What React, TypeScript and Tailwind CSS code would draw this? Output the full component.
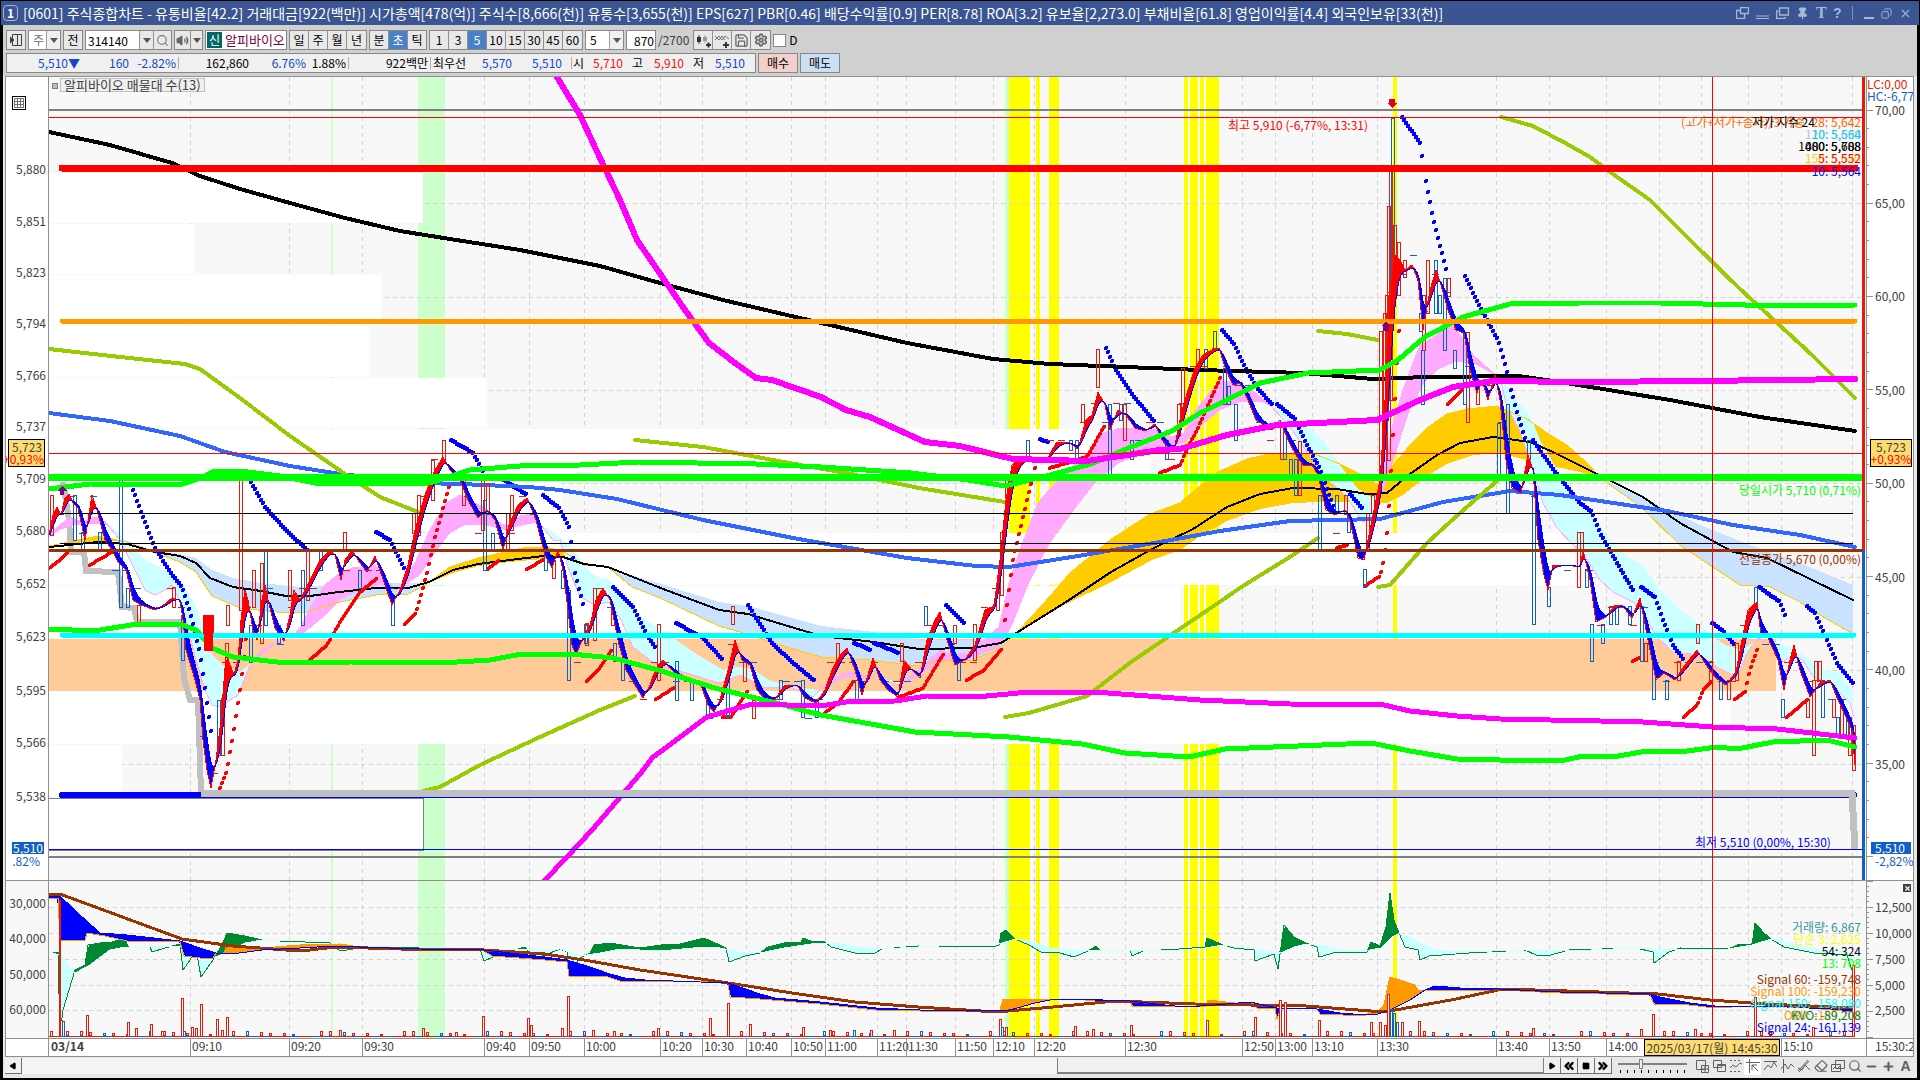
import React from 'react';
import { ChevronsLeft, ChevronsRight, Copy, Eraser, Minus, Pin, Play, Plus, Save, Search, Settings, Square, Volume2, X } from 'lucide-react';

type Pt = [number, number];

// "x,y x,y ..." -> points
const parse = (s: string): Pt[] => s.trim().split(/\s+/).map((p) => p.split(',').map(Number) as Pt);

const at = (pts: Pt[], x: number) => {
  if (x <= pts[0][0]) return pts[0][1];
  for (let i = 1; i < pts.length; i++) {
    if (x <= pts[i][0]) {
      const [x0, y0] = pts[i - 1];
      const [x1, y1] = pts[i];
      return y0 + ((y1 - y0) * (x - x0)) / (x1 - x0 || 1);
    }
  }
  return pts[pts.length - 1][1];
};

const sample = (pts: Pt[], step = 2): Pt[] => {
  const out: Pt[] = [];
  for (let x = pts[0][0]; x <= pts[pts.length - 1][0]; x += step) out.push([x, at(pts, x)]);
  return out;
};

const str = (pts: Pt[]) => pts.map((p) => p.join(',')).join(' ');

// area between two lines, split by which of them is on top
const split = (a: Pt[], b: Pt[]) => {
  const A = sample(a);
  const up: Pt[] = [];
  const down: Pt[] = [];
  const base: Pt[] = [];
  A.forEach(([x, y]) => {
    const yb = at(b, x);
    up.push([x, Math.min(y, yb)]);
    down.push([x, Math.max(y, yb)]);
    base.unshift([x, yb]);
  });
  return { up: str([...up, ...base]), down: str([...down, ...base]) };
};

const X0 = 49;
const W = 1817;
const TOP = 77;
const SUB = 881;
const pct = (x: number) => `${((x - X0) / W) * 100}%`;

const GRID_X = [190, 289, 362, 484, 529, 584, 660, 702, 746, 791, 825, 877, 906, 955, 993, 1034, 1125, 1242, 1275, 1312, 1377, 1496, 1549, 1606, 1659, 1701, 1748, 1781, 1852];
const GRID_Y = [203, 297, 390, 483, 577, 670, 764];
const SUB_Y = [907, 933, 959, 985, 1010];

const TIMES: [number, string][] = [
  [190, '09:10'], [289, '09:20'], [362, '09:30'], [484, '09:40'], [529, '09:50'], [584, '10:00'], [660, '10:20'], [702, '10:30'], [746, '10:40'],
  [791, '10:50'], [825, '11:00'], [877, '11:20'], [906, '11:30'], [955, '11:50'], [993, '12:10'], [1034, '12:20'], [1125, '12:30'], [1242, '12:50'],
  [1275, '13:00'], [1312, '13:10'], [1377, '13:30'], [1496, '13:40'], [1549, '13:50'], [1606, '14:00'], [1781, '15:10'],
];

const STRIPES: [number, number, string][] = [
  [331, 2, '#ccffcc'], [418, 27, '#ccffcc'], [1005, 4, '#ccffcc'], [1009, 21, '#ffff00'], [1036, 4, '#ffff00'], [1049, 10, '#ffff00'],
  [1184, 4, '#ffff00'], [1190, 8, '#ffff00'], [1200, 4, '#ffff00'], [1206, 13, '#ffff00'], [1393, 4, '#ffff00'],
];

// volume profile: top, bottom, right edge
const PROFILE: [number, number, number][] = [
  [173, 223, 423], [224, 274, 194], [275, 325, 381], [326, 377, 369], [378, 428, 487], [429, 480, 1150], [481, 532, 561],
  [533, 585, 1575], [586, 638, 1180], [691, 744, 1730], [745, 796, 122],
];

const LEFT_LABELS: [number, string][] = [
  [169, '5,880'], [221, '5,851'], [272, '5,823'], [323, '5,794'], [375, '5,766'], [426, '5,737'], [478, '5,709'], [530, '5,680'],
  [583, '5,652'], [636, '5,623'], [690, '5,595'], [742, '5,566'], [796, '5,538'],
];
const RIGHT_LABELS: [number, string][] = [
  [110, '70,00'], [203, '65,00'], [296, '60,00'], [390, '55,00'], [483, '50,00'], [577, '45,00'], [670, '40,00'], [764, '35,00'],
];

const PRICE = parse(`49,535 53,515 57,507 61,515 65,498 69,494 73,503 78,508 85,540 92,495 97,510 105,540 112,550 118,562 126,570 133,600 141,605
155,610 165,604 172,598 180,600 183,620 186,650 195,680 200,700 203,740 207,770 211,788 216,760 221,720 226,655 234,675 238,660 241,620 245,590
248,600 253,630 257,640 262,600 265,585 268,600 275,628 284,641 290,615 294,590 300,600 310,580 320,560 330,550 335,555 341,580 345,560 352,550
358,560 367,572 375,556 385,585 392,605 400,590 408,565 415,530 425,495 435,470 443,457 450,470 460,480 468,500 478,518 487,510 495,520 503,550
509,525 518,505 527,498 536,520 545,555 552,568 558,550 563,570 568,610 572,645 576,655 582,640 590,625 596,600 603,588 610,600 618,640 626,670
635,685 643,698 650,685 656,668 663,660 670,668 680,678 700,682 708,705 714,712 720,700 728,670 735,640 742,660 750,665 757,690 765,699 775,699
785,685 797,685 805,698 816,703 825,690 832,670 840,655 847,648 855,670 862,695 868,675 873,658 880,680 888,690 898,697 904,660 912,670 920,678
927,640 935,620 940,612 947,640 955,665 965,660 975,645 985,610 994,606 1000,560 1006,500 1012,465 1018,460 1030,457 1040,460 1048,458 1056,443
1068,442 1078,449 1086,420 1092,415 1098,392 1105,405 1110,430 1118,410 1126,415 1135,428 1145,431 1155,424 1162,440 1170,450 1175,445 1182,410
1188,390 1195,368 1203,355 1212,350 1219,348 1226,370 1233,385 1240,383 1248,400 1256,420 1264,425 1272,430 1280,420 1288,440 1296,455 1303,465
1312,465 1318,475 1326,510 1335,515 1345,510 1350,520 1358,558 1364,560 1370,530 1376,500 1380,480 1384,420 1388,340 1392,280 1395,255 1400,260
1405,270 1412,265 1418,280 1423,330 1430,290 1436,270 1441,285 1448,310 1456,330 1464,333 1470,370 1477,393 1482,380 1488,400 1495,375 1500,400
1506,460 1512,488 1521,493 1528,455 1533,470 1538,540 1544,575 1548,590 1553,565 1565,565 1580,567 1583,550 1590,580 1596,622 1606,617 1615,605
1622,605 1632,618 1640,598 1648,640 1656,680 1664,673 1675,680 1685,665 1697,650 1706,665 1716,678 1726,685 1736,672 1742,640 1748,610 1757,602
1761,635 1768,638 1778,660 1784,690 1790,660 1794,645 1800,670 1810,697 1820,683 1830,680 1838,700 1845,715 1852,730 1855,765`);

const smooth = (pts: Pt[], k: number): Pt[] => {
  let last = pts[0][1];
  return sample(pts).map(([x, y]) => {
    last += (y - last) * k;
    return [x, last] as Pt;
  });
};

const PRICE_SLOW = smooth(PRICE, 0.32);

const PINK_FAST = parse(`49,535 60,525 70,517 82,522 95,517 105,522 120,540 130,560 145,590 155,595 165,590 172,585 182,605 196,660 205,690 212,705
220,707 230,700 238,695 250,665 262,650 275,643 290,640 300,628 310,608 325,585 340,573 355,567 368,569 375,565 385,578 395,590 403,585 415,563
430,530 445,504 460,495 473,502 485,508 497,522 507,526 520,516 532,514 545,530 553,540 560,540 568,567 580,597 595,605 609,602 621,620 633,647
654,663 703,678 719,683 740,675 764,687 793,688 813,697 829,680 850,672 870,677 899,685 919,670 940,650 952,655 968,653 984,640 999,627 1009,583
1021,547 1038,503 1058,480 1087,453 1103,433 1121,428 1156,430 1172,437 1184,433 1193,414 1220,380 1247,386 1270,405 1283,419 1293,431 1307,452
1320,473 1347,497 1363,522 1377,514 1382,476 1393,424 1403,390 1420,345 1437,335 1450,323 1460,335 1473,355 1493,373 1500,378 1507,407 1520,431
1533,469 1543,503 1557,528 1573,545 1583,553 1600,580 1613,592 1633,602 1643,613 1657,637 1673,652 1700,655 1717,667 1737,677 1747,653 1758,638
1770,643 1783,662 1793,655 1803,660 1813,677 1830,683 1850,703 1854,717`);
const PINK_SLOW = parse(`49,537 60,530 75,525 95,524 110,525 125,540 145,560 165,570 180,580 195,605 205,630 212,655 225,667 240,672 255,660 275,644
300,636 320,620 340,600 360,590 380,585 395,588 405,585 420,575 435,553 450,533 465,525 485,525 505,530 520,526 535,523 550,530 570,545 590,572
600,578 610,580 621,593 642,617 666,633 695,653 723,670 736,667 752,668 768,680 797,687 817,690 846,677 870,677 907,683 927,670 948,660 968,660
984,653 1001,647 1013,623 1029,583 1050,543 1074,510 1095,483 1119,463 1152,450 1172,447 1184,443 1200,427 1220,410 1240,402 1262,402 1280,411
1295,420 1310,428 1325,443 1340,465 1357,488 1370,497 1382,495 1390,472 1400,440 1410,410 1423,385 1437,370 1455,362 1473,363 1493,374 1505,384
1515,400 1530,415 1540,440 1560,475 1575,500 1593,515 1610,540 1625,555 1643,565 1660,590 1680,610 1697,622 1712,636 1725,645 1740,650 1758,640
1775,642 1795,650 1810,660 1825,670 1840,673 1854,693`);

const GOLD_FAST = parse(`49,546 98,536 127,542 155,553 180,562 196,572 212,596 240,608 286,613 306,612 335,603 376,595 408,594 425,585 450,567 478,558
510,551 527,547 545,547 563,551 584,565 608,567 632,587 660,598 719,626 740,632 790,648 821,657 870,660 919,666 940,661 972,660 1001,648 1021,628
1045,602 1070,573 1110,540 1150,514 1180,503 1200,486 1220,471 1247,459 1273,453 1293,453 1317,455 1340,464 1360,474 1377,484 1390,469 1410,445
1427,428 1447,414 1467,409 1497,406 1527,419 1550,435 1567,445 1590,466 1600,478 1640,506 1680,545 1740,585 1770,587 1800,602 1820,615 1853,634`);
const GOLD_SLOW = parse(`49,545 98,541 127,541 155,551 180,554 196,558 212,570 233,578 261,583 300,587 339,585 376,583 408,583 429,583 453,573 478,566
510,562 543,559 563,558 584,565 608,567 640,578 658,583 719,602 748,606 821,626 874,632 919,640 972,640 1001,643 1021,630 1066,604 1111,582
1152,560 1180,550 1203,534 1227,521 1260,509 1293,503 1320,502 1347,502 1363,505 1387,503 1403,495 1427,476 1447,464 1473,455 1500,453 1523,459
1547,465 1580,472 1600,478 1660,506 1700,525 1750,545 1800,563 1853,585`);

interface Line {
  color: string;
  width: number;
  points: string;
}

const LINES: Line[] = [
  { color: '#000000', width: 4, points: '49,132 110,145 172,163 200,176 240,189 290,203 345,218 400,231 450,239 520,250 600,266 660,283 723,300 817,322 907,343 993,359 1050,364 1200,370 1303,373 1373,379 1427,377 1518,376 1560,382 1670,400 1760,417 1855,431' },
  { color: '#3366ff', width: 4, points: '49,413 110,421 180,436 225,452 290,466 340,474 420,483 460,484 529,487 560,490 617,499 703,520 793,538 907,558 976,566 1009,567 1078,556 1160,542 1220,531 1290,521 1380,519 1443,502 1510,491 1560,495 1667,511 1733,525 1800,535 1855,547' },
  { color: '#99cc00', width: 4, points: '49,349 120,357 185,364 200,369 240,398 290,436 345,474 380,497 418,512' },
  { color: '#99cc00', width: 4, points: '423,791 440,787 480,765 540,737 600,710 635,696' },
  { color: '#99cc00', width: 4, points: '635,440 703,447 789,463 846,473 919,488 1005,502' },
  { color: '#99cc00', width: 4, points: '1005,717 1029,713 1087,696 1131,662 1193,620 1243,586 1293,555 1318,538' },
  { color: '#99cc00', width: 4, points: '1318,331 1347,334 1378,340' },
  { color: '#99cc00', width: 4, points: '1378,587 1390,585 1427,543 1460,513 1497,481' },
  { color: '#99cc00', width: 4, points: '1501,117 1533,126 1567,144 1590,157 1610,172 1650,200 1695,245 1739,288 1812,355 1855,398' },
  { color: '#00ff00', width: 5, points: '49,629 94,631 131,625 180,624 196,630 212,648 233,657 286,663 351,662 441,663 490,660 522,654 571,654 613,658 658,670 715,688 772,702 821,715 915,732 1009,737 1082,744 1125,753 1189,757 1225,749 1371,743 1410,751 1457,759 1500,760 1565,760 1583,756 1613,757 1647,751 1687,751 1717,747 1737,749 1773,742 1827,740 1855,747' },
  { color: '#00ff00', width: 5, points: '49,489 90,484 180,485 200,478 215,471 240,471 280,476 320,484 430,483 470,470 520,466 580,465 638,462 756,464 821,467 911,473 968,480 1005,486 1050,475 1091,464 1131,447 1172,431 1200,413 1227,400 1260,383 1308,373 1380,370 1398,360 1425,337 1463,317 1510,304 1580,303 1660,303 1788,306 1855,305' },
  { color: '#ff00ff', width: 6, points: '557,77 580,115 600,158 620,200 637,240 661,275 685,310 709,343 735,363 756,378 772,380 821,397 846,410 870,417 925,442 960,446 1013,459 1087,461 1160,450 1180,449 1227,435 1277,425 1377,420 1420,400 1453,387 1493,381 1580,382 1700,381 1855,379' },
  { color: '#ff00ff', width: 5, points: '545,880 567,857 592,830 640,774 652,758 660,752 707,717 752,704 821,706 846,702 895,701 927,696 976,697 1029,692 1095,692 1200,700 1290,704 1384,705 1410,711 1457,716 1500,719 1600,721 1643,722 1713,727 1777,729 1855,738' },
];

const MID_BLACK = '49,547 98,542 127,544 155,552 180,556 196,563 210,578 233,587 261,591 286,596 310,596 339,592 376,588 408,588 429,582 453,570 478,564 510,560 543,556 563,557 584,564 608,567 658,587 719,610 748,614 821,636 874,642 919,649 972,648 1001,643 1021,630 1066,602 1111,572 1152,549 1193,529 1227,507 1260,494 1293,488 1337,489 1367,494 1387,493 1410,474 1437,455 1460,443 1493,437 1530,442 1553,452 1593,472 1643,497 1680,523 1733,552 1767,558 1853,600';

const SAR_DOWN = [
  '133,490 143,517 155,548 171,573 182,587 190,612 200,653 212,738', '251,482 265,507 286,530 308,551', '376,532 390,540 404,568',
  '451,440 473,453 484,473', '504,480 527,495', '543,495 559,508 569,527 575,573 584,608', '613,587 633,607 646,633 656,649',
  '676,623 703,638 723,660', '748,605 772,643 793,663 815,681', '854,643 871,650', '874,643 899,653', '946,605 965,624', '1040,439 1048,442',
  '1106,348 1115,368 1131,393 1154,421', '1222,330 1234,344 1245,367 1257,388 1273,405', '1277,404 1295,419 1307,445 1320,469 1333,506',
  '1350,494 1363,509', '1402,117 1420,143 1425,176 1433,218 1447,273', '1465,276 1480,307 1498,340 1506,367 1510,386 1517,412 1525,438',
  '1533,440 1553,469 1580,503 1592,512 1600,533 1617,563 1633,590', '1641,587 1655,597 1662,617 1673,645 1683,659', '1712,623 1722,630 1734,644',
  '1759,587 1780,602 1786,618', '1807,606 1815,613 1827,640 1837,663 1853,683',
];
const SAR_UP = [
  '49,568 60,560 68,552', '90,565 112,552', '220,788 227,770 235,723 241,683 247,630', '310,660 327,645 343,617 359,593 376,579',
  '405,624 416,613 427,573 435,537 449,487', '488,569 498,561', '527,569 543,560', '587,681 598,670 612,650', '656,699 674,688',
  '723,717 731,717 748,690', '825,713 838,703 854,681', '899,697 923,688 944,653', '967,680 984,670 1001,650 1013,560 1027,500 1035,468',
  '1050,468 1087,457 1105,425', '1160,473 1180,465 1188,447 1198,428 1220,378', '1337,548 1348,545',
  '1365,586 1380,576 1384,559 1388,524 1394,417 1398,345 1400,317', '1448,404 1463,389', '1633,661 1640,658', '1684,717 1697,705 1703,690 1711,682',
  '1735,699 1745,692 1750,670 1757,650', '1787,717 1807,700',
];

// one dot per bar, so steep moves spread out
const dots = (p: string) => sample(parse(p)).map(([x, y]) => `M${x} ${Math.round(y)}h0`).join('');

// candles: x, high, low
const CANDLES_UP = [
  [51, 495, 535], [240, 480, 610], [227, 605, 625], [253, 570, 607], [261, 563, 643], [289, 570, 600], [307, 550, 600], [344, 532, 550], [443, 440, 460],
  [432, 460, 500], [418, 495, 535], [413, 513, 533], [463, 480, 505], [482, 480, 530], [487, 483, 513], [511, 495, 530], [507, 513, 550], [553, 560, 578],
  [173, 587, 607], [594, 588, 640], [586, 623, 645], [612, 607, 625], [138, 605, 625], [226, 643, 680], [222, 698, 755], [658, 624, 680], [732, 606, 624],
  [744, 661, 681], [753, 700, 718], [837, 643, 661], [901, 643, 661], [954, 625, 643], [974, 624, 660], [1001, 532, 595], [997, 587, 610], [1006, 480, 498],
  [1097, 349, 387], [1082, 404, 422], [1124, 404, 440], [1178, 404, 435], [1182, 368, 415], [1197, 349, 370], [1281, 422, 459], [1299, 441, 495],
  [1345, 495, 513], [1372, 495, 513], [1367, 513, 550], [1380, 331, 480], [1384, 313, 480], [1388, 206, 460], [1386, 295, 420], [1390, 171, 400], [1394, 225, 280],
  [1398, 242, 295], [1404, 260, 277], [1427, 260, 313], [1423, 295, 350], [1448, 278, 296], [1467, 332, 422], [1477, 386, 404], [1578, 532, 587],
  [1581, 532, 550], [1697, 624, 643], [1678, 661, 680], [1710, 661, 680], [1728, 680, 699], [1736, 643, 680], [1645, 643, 661], [1815, 661, 680], [1813, 680, 755],
  [1819, 661, 680], [1807, 699, 717], [1833, 699, 717], [1841, 699, 736], [1849, 717, 755], [1853, 725, 770],
];
const CANDLES_DOWN = [
  [74, 495, 540], [82, 532, 550], [120, 480, 607], [127, 588, 607], [99, 532, 550], [182, 615, 660], [218, 700, 755], [250, 625, 662], [265, 550, 625],
  [278, 625, 643], [302, 570, 625], [320, 550, 570], [359, 570, 588], [392, 600, 625], [484, 500, 570], [492, 533, 550], [545, 550, 570], [562, 570, 588],
  [568, 590, 680], [585, 624, 643], [614, 643, 661], [622, 661, 680], [676, 661, 700], [691, 680, 700], [707, 699, 717], [727, 680, 717], [780, 680, 699],
  [802, 680, 717], [816, 699, 717], [856, 680, 700], [925, 606, 625], [958, 661, 680], [1027, 440, 458], [1070, 440, 450], [1076, 440, 458], [1109, 404, 480],
  [1120, 404, 420], [1131, 440, 459], [1166, 440, 459], [1214, 331, 350], [1205, 349, 368], [1224, 368, 404], [1228, 386, 404], [1235, 404, 440],
  [1284, 422, 459], [1290, 459, 480], [1295, 459, 495], [1319, 495, 550], [1336, 495, 513], [1348, 513, 532], [1364, 569, 587], [1392, 118, 300],
  [1420, 313, 331], [1422, 350, 404], [1435, 260, 313], [1439, 295, 313], [1444, 278, 350], [1454, 350, 368], [1464, 332, 404], [1498, 423, 480],
  [1507, 404, 513], [1528, 440, 459], [1533, 495, 624], [1548, 587, 606], [1586, 569, 587], [1591, 624, 661], [1602, 624, 643], [1610, 606, 624],
  [1616, 606, 624], [1629, 606, 624], [1641, 606, 661], [1653, 661, 699], [1666, 680, 699], [1720, 680, 699], [1755, 587, 606], [1782, 699, 717],
  [1822, 680, 717], [1837, 717, 736], [1847, 717, 736],
];

const KVO_FAST = parse(`49,952 58,952 60,1035 63,1010 75,970 85,965 88,945 100,943 112,942 125,938 128,947 150,947 152,952 165,948 180,944 183,970 190,960
195,952 198,960 201,977 213,960 222,945 227,933 245,936 262,940 280,941 330,943 340,951 360,948 420,947 480,949 484,961 500,954 525,947 530,955
540,957 560,949 567,952 569,975 580,958 590,953 594,945 610,943 640,948 661,945 680,944 704,938 722,946 726,948 729,962 745,956 760,953 768,947
784,943 801,942 803,938 811,941 825,942 831,947 855,953 875,953 882,949 918,946 993,947 999,945 1001,933 1006,930 1015,939 1029,945 1041,952
1060,953 1074,957 1088,951 1096,946 1100,950 1130,950 1132,956 1143,951 1179,949 1205,947 1207,938 1223,945 1234,948 1254,950 1255,961 1274,954
1278,969 1281,947 1284,925 1294,937 1306,943 1317,947 1319,957 1337,952 1367,952 1371,942 1380,946 1386,927 1390,893 1394,920 1399,933 1405,947
1418,950 1420,960 1429,956 1469,953 1525,950 1536,955 1547,956 1569,950 1636,948 1653,952 1654,963 1669,952 1680,948 1728,949 1740,944 1752,945
1755,923 1764,933 1771,939 1784,947 1814,953 1847,955 1852,970 1854,1030`);
const KVO_SLOW = parse(`49,952 60,955 75,973 90,965 110,950 125,947 150,947 180,946 195,952 213,958 225,953 245,943 262,940 300,940 330,942 345,946
420,947 484,949 500,950 560,949 580,956 600,953 620,949 660,951 704,947 720,948 740,952 760,953 784,948 811,944 831,943 855,946 875,949 900,948
918,947 960,945 993,946 1015,939 1030,941 1050,948 1075,951 1096,950 1130,950 1179,950 1205,948 1223,945 1250,948 1270,952 1281,953 1294,947
1306,944 1325,946 1345,951 1370,950 1381,948 1392,937 1400,933 1415,940 1435,950 1460,952 1525,950 1569,951 1636,948 1665,950 1728,949 1752,945
1771,939 1790,943 1820,950 1847,952 1854,958`);
const OBV_FAST = parse(`49,898 58,898 60,940 85,940 87,933 105,936 127,941 180,942 184,956 200,958 213,958 216,953 224,953 226,947 262,948 300,945 340,944
360,947 420,950 484,951 492,956 545,960 567,962 569,976 605,976 620,981 640,981 728,982 730,997 760,999 820,1004 876,1010 920,1011 997,1012
1000,1010 1003,999 1030,999 1075,999 1095,1001 1130,1001 1132,1006 1160,1006 1206,1006 1208,1000 1235,1003 1255,1003 1257,1008 1275,1008
1277,1019 1281,1008 1317,1009 1320,1014 1365,1016 1371,1011 1378,1011 1384,1005 1388,985 1390,977 1400,980 1415,985 1418,990 1425,990 1500,990
1560,993 1650,995 1654,1004 1680,1004 1715,1008 1750,1006 1800,1007 1853,1012`);
const OBV_SLOW = parse(`49,896 61,897 80,915 100,933 127,935 180,941 200,948 216,953 232,954 262,950 300,948 335,946 360,947 420,949 484,950 545,957
567,960 590,967 610,974 625,978 645,980 728,983 740,987 760,994 775,998 820,1002 876,1008 920,1010 997,1011 1010,1010 1035,1003 1055,999 1075,999
1130,1001 1165,1005 1185,1007 1215,1005 1250,1002 1277,1008 1317,1009 1340,1013 1365,1015 1378,1014 1390,1010 1410,1000 1425,990 1435,986
1460,988 1500,989 1560,992 1650,994 1660,997 1690,1003 1715,1006 1765,1006 1853,1010`);
const SIGNAL = '49,894 60,894 182,939 233,946 286,950 310,950 335,947 400,949 484,950 545,954 590,961 640,970 735,984 792,993 855,1002 918,1007 997,1012 1053,1007 1116,1001 1195,1004 1306,1006 1384,1012 1451,1000 1503,989 1599,992 1658,994 1710,1000 1765,1004 1854,1008';

const VOLUME: [number, number][] = [
  [51, 1031], [61, 1020], [87, 1015], [128, 1022], [136, 1028], [151, 1024], [162, 1031], [182, 998], [192, 1027], [196, 1028], [201, 1004], [217, 1019],
  [222, 1030], [227, 1017], [340, 1030], [423, 1028], [456, 1032], [483, 1016], [528, 1018], [531, 1025], [562, 1028], [568, 996], [593, 1030], [614, 1031],
  [658, 1028], [710, 1018], [728, 1003], [750, 1024], [803, 1027], [830, 1030], [871, 1030], [894, 1030], [1000, 1019], [1006, 1027], [1075, 1026],
  [1093, 1029], [1131, 1025], [1207, 1020], [1255, 1017], [1280, 1000], [1285, 1002], [1319, 1020], [1371, 1022], [1380, 1022], [1385, 1025], [1388, 994],
  [1402, 1022], [1419, 1021], [1533, 1028], [1641, 1029], [1653, 1014], [1695, 1029], [1755, 997], [1813, 1027], [1853, 965],
];

const TEXT = "font-['Noto_Sans_CJK_KR',sans-serif] text-[12px] leading-3";

const Poly = ({ color, width, points }: Line) => (
  <polyline points={points} fill="none" stroke={color} strokeWidth={width} strokeLinecap="round" strokeLinejoin="round" />
);

const Band = ({ id, fast, slow, up, down }: { id: string; fast: Pt[]; slow: Pt[]; up: string; down: string }) => {
  const area = split(fast, slow);
  return (
    <g id={id}>
      <polygon points={area.up} fill={up} />
      <polygon points={area.down} fill={down} />
    </g>
  );
};

const Candles = ({ data, color }: { data: number[][]; color: string }) => (
  <g fill="none" stroke={color} strokeWidth={1}>
    {data.map(([x, y0, y1], i) => (
      <rect key={i} x={x - 1} y={y0} width={3} height={y1 - y0} />
    ))}
  </g>
);

// short ticks at the traded price steps
const STEPS = sample(PRICE, 11).map(([x, y], i) => {
  const level = 440 + Math.round((y - 440 + (i % 3 === 0 ? 9 : -7)) / 18.5) * 18.5;
  return { x, y: Math.round(level), up: at(PRICE, x + 4) < y };
});

const PricePane = () => (
  <svg viewBox={`${X0} ${TOP} ${W} 803`} preserveAspectRatio="none" shapeRendering="crispEdges" className="block h-full w-full">
    <rect x={X0} y={TOP} width={W} height={803} fill="#f8f8f8" />
    {STRIPES.map(([x, w, c]) => (
      <rect key={x} x={x} y={TOP} width={w} height={803} fill={c} />
    ))}
    <g stroke="#d4d4d4" strokeDasharray="4 4">
      {GRID_X.map((x) => <line key={x} x1={x} x2={x} y1={TOP} y2={880} />)}
      {GRID_Y.map((y) => <line key={y} x1={X0} x2={1861} y1={y} y2={y} />)}
    </g>
    {PROFILE.map(([y0, y1, x]) => (
      <rect key={y0} x={X0} y={y0} width={x - X0} height={y1 - y0} fill="#ffffff" />
    ))}
    <rect x={X0} y={639} width={1727} height={52} fill="#ffcc99" />
    <rect x={X0 - 1} y={798} width={375} height={52} fill="#ffffff" stroke="#808080" />
    <line x1={X0} x2={1862} y1={110} y2={110} stroke="#808080" strokeWidth={2} />
    <line x1={X0} x2={1862} y1={857} y2={857} stroke="#808080" strokeWidth={2} />

    <polyline points="63,482 69,520 71,552 84,552 86,571 118,572 122,607 134,608 137,622 180,622 184,678 190,700 198,700 201,793" fill="none" stroke="#c0c0c0" strokeWidth={6} />
    <Band id="gold" fast={GOLD_FAST} slow={GOLD_SLOW} up="#ffcc00" down="#c8e2ff" />
    <Band id="pink" fast={PINK_FAST} slow={PINK_SLOW} up="#ffaaff" down="#ccffff" />
    <polyline points={str(GOLD_FAST)} fill="none" stroke="#ffcc00" />
    <polyline points={str(PINK_FAST)} fill="none" stroke="#ffaaff" />
    <Poly color="#000000" width={2} points={MID_BLACK} />

    <g fill="none" strokeWidth={4} strokeLinecap="round">
      {SAR_DOWN.map((p) => <path key={p} d={dots(p)} stroke="#0000ff" />)}
      {SAR_UP.map((p) => <path key={p} d={dots(p)} stroke="#ff0000" />)}
    </g>

    {LINES.slice(0, 9).map((l) => <Poly key={l.points} {...l} />)}
    <Candles data={CANDLES_UP} color="#e81a0c" />
    <Candles data={CANDLES_DOWN} color="#1060c8" />
    {STEPS.map((s) => (
      <line key={s.x} x1={s.x - 3} x2={s.x + 4} y1={s.y} y2={s.y} stroke={s.up ? '#e81a0c' : '#1060c8'} />
    ))}
    <Band id="price" fast={PRICE} slow={PRICE_SLOW} up="#ff0000" down="#0000ff" />
    <polyline points={str(PRICE)} fill="none" stroke="#ff0000" strokeWidth={1} />
    <polyline points={str(PRICE_SLOW)} fill="none" stroke="#0000ff" strokeWidth={1} />
    {LINES.slice(9).map((l) => <Poly key={l.points} {...l} />)}

    <Poly color="#ff0000" width={7} points="62,168 1855,168" />
    <Poly color="#ff9900" width={5} points="62,321 1855,321" />
    <line x1={X0} x2={1862} y1={477} y2={477} stroke="#00ff00" strokeWidth={7} />
    <line x1={60} x2={1853} y1={513} y2={513} stroke="#000000" />
    <line x1={60} x2={1853} y1={543} y2={543} stroke="#000000" />
    <line x1={X0} x2={1862} y1={550} y2={550} stroke="#993300" strokeWidth={3} />
    <Poly color="#00ffff" width={5} points="62,635 1854,635" />
    <Poly color="#0000ff" width={6} points="62,795 1854,795" />
    <polyline points="201,793 1852,793 1855,850" fill="none" stroke="#c0c0c0" strokeWidth={7} />
    <line x1={X0} x2={1862} y1={849} y2={849} stroke="#0000ff" />
    <line x1={X0} x2={1862} y1={117} y2={117} stroke="#ff0000" />
    <line x1={X0} x2={1862} y1={453} y2={453} stroke="#ff0000" />

    <path d="M203 615h11l-1 36h-9z" fill="#ff0000" />
    <path d="M62 486l5 5h-3v4h-4v-4h-3z" fill="#800080" />
    <path d="M1386 322l5 4h-2v5h-6v-5h-2z" fill="#800080" />
    <path d="M1392 108l5-5h-2v-4h-6v4h-2z" fill="#dd0022" />
    <line x1={1712} x2={1712} y1={TOP} y2={880} stroke="#ff0000" />
    <rect x={1862} y={TOP} width={3} height={473} fill="#e81a0c" />
    <rect x={1862} y={550} width={3} height={330} fill="#1060c8" />
  </svg>
);

const VolumePane = () => (
  <svg viewBox={`${X0} ${SUB} ${W} 157`} preserveAspectRatio="none" shapeRendering="crispEdges" className="block h-full w-full">
    <rect x={X0} y={SUB} width={W} height={157} fill="#f8f8f8" />
    {STRIPES.map(([x, w, c]) => (
      <rect key={x} x={x} y={SUB} width={w} height={157} fill={c} />
    ))}
    <g stroke="#d4d4d4" strokeDasharray="4 4">
      {GRID_X.map((x) => <line key={x} x1={x} x2={x} y1={SUB} y2={1038} />)}
      {SUB_Y.map((y) => <line key={y} x1={X0} x2={1861} y1={y} y2={y} />)}
    </g>
    <Band id="kvo" fast={KVO_FAST} slow={KVO_SLOW} up="#008833" down="#ccffff" />
    <polyline points={str(KVO_FAST)} fill="none" stroke="#008833" />
    <polyline points={str(KVO_SLOW)} fill="none" stroke="#ccffff" />
    <Band id="obv" fast={OBV_FAST} slow={OBV_SLOW} up="#ff9900" down="#0000ff" />
    <polyline points={str(OBV_FAST)} fill="none" stroke="#ff9900" />
    <Poly color="#993300" width={3} points={SIGNAL} />
    <polyline points={str(OBV_SLOW)} fill="none" stroke="#0000ff" />
    <line x1={60} x2={60} y1={900} y2={1037} stroke="#e81a0c" strokeWidth={2} />
    <line x1={X0} x2={1855} y1={1036} y2={1036} stroke="#1060c8" />
    <line x1={X0} x2={1855} y1={1036} y2={1036} stroke="#e81a0c" strokeDasharray="14 9 5 6 21 7" />
    <g fill="none" strokeWidth={1}>
      {Array.from({ length: 150 }).map((_, i) => (
        <rect key={i} x={52 + i * 12 + ((i * 7) % 5)} y={1035 - ((i * 13) % 7) / 1.5} width={2} height={((i * 13) % 7) / 1.5} stroke={i % 4 === 0 ? '#1060c8' : '#e81a0c'} />
      ))}
      {VOLUME.map(([x, y]) => (
        <rect key={x} x={x - 1} y={y} width={2} height={1036 - y} fill="#f8f8f8" stroke="#e81a0c" />
      ))}
      {[[63, 1021], [184, 1031], [854, 1030], [1002, 1027], [1391, 1009], [1394, 1013], [1397, 1022]].map(([x, y]) => (
        <rect key={x} x={x - 1} y={y} width={2} height={1036 - y} stroke="#1060c8" />
      ))}
    </g>
    <line x1={1712} x2={1712} y1={SUB} y2={1038} stroke="#ff0000" />
  </svg>
);

const Note = ({ top, x, className = '', children }: { top: number; x?: number; className?: string; children: React.ReactNode }) => (
  <span
    className={`absolute -translate-y-1/2 whitespace-nowrap ${x === undefined ? 'right-[5px]' : ''} ${className}`}
    style={x === undefined ? { top } : { top, left: pct(x) }}
  >
    {children}
  </span>
);

const Axis = ({ labels, origin, side }: { labels: [number, string][]; origin: number; side: 'left' | 'right' }) => (
  <>
    {labels.map(([y, t]) => (
      <span key={t} className={`absolute -translate-y-1/2 text-[#404040] ${side === 'left' ? 'right-0.5' : 'left-2'}`} style={{ top: y - origin }}>
        {t}
      </span>
    ))}
  </>
);

// tick marks down the inner edge of a right-hand axis
const Ticks = ({ from, to, step, major }: { from: number; to: number; step: number; major: number }) => {
  const n = Math.floor((to - from) / step);
  return (
    <svg className="absolute top-0 left-0 h-full w-1.5" shapeRendering="crispEdges">
      {Array.from({ length: n + 1 }).map((_, i) => (
        <line key={i} x1={0} x2={i % major === 0 ? 6 : 2} y1={from + i * step} y2={from + i * step} stroke="#909090" />
      ))}
    </svg>
  );
};

const Btn = ({ children, active = false, className = 'w-[19px]', label }: { children: React.ReactNode; active?: boolean; className?: string; label?: string }) => (
  <button
    type="button"
    aria-label={label}
    className={`flex h-full items-center justify-center border-r border-[#909090] last:border-r-0 ${active ? 'bg-[#4a80c8] text-white' : 'bg-[#e8e8e8]'} ${className}`}
  >
    {children}
  </button>
);

const Group = ({ children, className = '' }: { children: React.ReactNode; className?: string }) => (
  <div className={`flex h-5 shrink-0 border border-[#888888] bg-white ${className}`}>{children}</div>
);

const Arrow = () => (
  <svg viewBox="0 0 8 5" className="h-[5px] w-2">
    <path d="M0 0h8L4 5z" fill="#555555" />
  </svg>
);

const Picker = ({ value, className, label }: { value: string; className: string; label: string }) => (
  <label className={`relative flex items-center ${className}`}>
    <select aria-label={label} defaultValue={value} className="h-full w-full appearance-none pl-1 outline-none">
      <option>{value}</option>
    </select>
    <span className="pointer-events-none absolute inset-y-0 right-0 flex w-[14px] items-center justify-center border-l border-[#a0a0a0] bg-[#f0f0f0]">
      <Arrow />
    </span>
  </label>
);

const TitleBar = () => (
  <header className="mr-px ml-px flex h-6 items-center bg-[#3a5591] pr-[7px] pl-0.5 text-white">
    <span className="mr-[5px] flex h-4 w-[15px] items-center justify-center rounded-sm border border-[#a9b6d6] font-bold">1</span>
    <h1 className="flex-1 text-[14px] leading-5 whitespace-nowrap">
      [0601] 주식종합차트 - 유통비율[42.2] 거래대금[922(백만)] 시가총액[478(억)] 주식수[8,666(천)] 유통수[3,655(천)] EPS[627] PBR[0.46] 배당수익률[0.9]
      PER[8.78] ROA[3.2] 유보율[2,273.0] 부채비율[61.8] 영업이익률[4.4] 외국인보유[33(천)]
    </h1>
    <div className="flex items-center gap-[7px] text-[#a9b6d6]">
      <button type="button" aria-label="새 창">
        <svg viewBox="0 0 13 12" className="h-3 w-[13px]" fill="none" stroke="currentColor"><path d="M4.500 .5h8v6h-8zM4 3.500H.5v8h8V7" strokeWidth="1.400" /></svg>
      </button>
      <button type="button" aria-label="숨기기">
        <svg viewBox="0 0 13 12" className="h-3 w-[13px]" fill="none" stroke="currentColor"><path d="M0 9h13M0 11.500h13" /></svg>
      </button>
      <button type="button" aria-label="복제">
        <svg viewBox="0 0 13 12" className="h-3 w-[13px]" fill="none" stroke="currentColor"><path d="M3.500 1h9v7h-9zM2 4H.5v7.500H9V10" strokeWidth="1.400" /></svg>
      </button>
      <button type="button" aria-label="고정"><Pin size={13} fill="currentColor" /></button>
      <button type="button" className="w-2.5 font-['Liberation_Serif',serif] text-[16px] font-bold">T</button>
      <button type="button" className="w-2 font-['Liberation_Sans',sans-serif] text-[14px] font-bold">?</button>
      <span className="mx-1 h-3.5 w-px bg-[#8090a8]" />
      <button type="button" aria-label="최소화" className="flex h-3 w-2.5 items-end border-b-2 border-current" />
      <button type="button" aria-label="이전 크기"><Copy size={11} className="-scale-x-100" /></button>
      <button type="button" aria-label="닫기"><X size={13} /></button>
    </div>
  </header>
);

const Toolbar = () => (
  <div className="flex gap-0.5 pl-[3px]">
    <Group><Btn label="차트 목록" className="w-[18px]">
      <svg viewBox="0 0 12 12" className="size-3" fill="none" stroke="#404040"><path d="M2.500 .5h9v11h-9z" /><path d="M0 3l4 3-4 3z" fill="#404040" /><path d="M7.500 1v10" /></svg>
    </Btn></Group>
    <Group><Picker value="주" label="종목 구분" className="w-[31px] text-[#707070]" /></Group>
    <Group><Btn className="w-[18px]">전</Btn></Group>
    <Group>
      <input aria-label="종목코드" defaultValue="314140" className="w-[53px] pl-0.5 outline-none" />
      <Btn label="최근 종목" className="w-[15px] border-l"><Arrow /></Btn>
      <Btn label="종목 검색" className="w-[17px]"><Search size={13} color="#777777" /></Btn>
    </Group>
    <Group>
      <Btn label="소리" className="w-4"><Volume2 size={13} color="#666666" fill="#666666" /></Btn>
      <Btn label="소리 설정" className="w-[11px]"><Arrow /></Btn>
    </Group>
    <Group className="w-[82px]">
      <span className="flex w-[17px] items-center justify-center border border-white bg-[#006666] text-white">신</span>
      <span className="flex items-center pl-0.5 text-[13px] whitespace-nowrap text-[#800040]">알피바이오</span>
    </Group>
    <Group><Btn>일</Btn><Btn>주</Btn><Btn>월</Btn><Btn>년</Btn></Group>
    <Group><Btn>분</Btn><Btn active>초</Btn><Btn className="w-[18px]">틱</Btn></Group>
    <Group>
      {['1', '3', '5', '10', '15', '30', '45', '60'].map((n) => (
        <Btn key={n} active={n === '5'}>{n}</Btn>
      ))}
    </Group>
    <Group><Picker value="5" label="주기" className="w-[37px]" /></Group>
    <Group className="w-[30px]">
      <input aria-label="조회 개수" defaultValue="870" className="w-full pr-px text-right outline-none" />
    </Group>
    <span className="flex items-center text-[#404040]">/2700</span>
    <Group className="ml-0.5">
      <Btn label="차트 추가">
        <svg viewBox="0 0 15 15" className="size-[15px]"><path d="M1 4h4v5H1zM2.500 2h1v9h-1z" fill="#333333" /><path d="M7 4h4v4H7zM8.500 2h1v8h-1z" fill="#999999" /><path d="M10 12h5M12.500 9.500v5" stroke="#333333" strokeWidth="2" /></svg>
      </Btn>
      <Btn label="지표 추가">
        <svg viewBox="0 0 15 15" className="size-[15px]" fill="none" stroke="#777777"><path d="M0 7l4-4 3 4 3-4 4 3M0 3l4 4 3-4 3 4" /><path d="M8 12h6M11 9v6" stroke="#333333" strokeWidth="2" /></svg>
      </Btn>
      <Btn label="저장"><Save size={15} color="#666666" /></Btn>
      <Btn label="설정"><Settings size={14} color="#666666" strokeWidth={3} /></Btn>
    </Group>
    <label className="flex items-center gap-[3px]">
      <input type="checkbox" className="size-[13px] appearance-none border border-[#888888] bg-white" />D
    </label>
  </div>
);

const QuoteBar = () => (
  <div className="mt-[3px] flex h-5 gap-0.5 pl-[3px]">
    <dl className="flex w-[750px] items-center border border-[#888888] bg-[#f0f0f0] whitespace-nowrap text-[#1048c8]">
      <dd className="w-[73px] text-right">5,510▼</dd>
      <dd className="w-[49px] text-right">160</dd>
      <dd className="w-[50px] border-r border-[#b0b0b0] pr-0.5 text-right">-2.82%</dd>
      <dd className="w-[70px] text-right text-black">162,860</dd>
      <dd className="w-[57px] text-right">6.76%</dd>
      <dd className="w-[43px] border-r border-[#b0b0b0] pr-0.5 text-right text-black">1.88%</dd>
      <dd className="w-[82px] border-r border-[#b0b0b0] pr-0.5 text-right text-black">922백만</dd>
      <dt className="w-[39px] pl-0.5 text-black">최우선</dt>
      <dd className="w-[42px] text-right">5,570</dd>
      <dd className="w-[60px] border-r border-[#b0b0b0] pr-[9px] text-right">5,510</dd>
      <dt className="w-[17px] pl-px text-black">시</dt>
      <dd className="w-[34px] text-right text-[#f01010]">5,710</dd>
      <dt className="w-[27px] pl-[9px] text-black">고</dt>
      <dd className="w-[34px] text-right text-[#f01010]">5,910</dd>
      <dt className="w-[27px] pl-[9px] text-black">저</dt>
      <dd className="w-[34px] text-right">5,510</dd>
    </dl>
    <button type="button" className="w-10 border border-[#888888] bg-[#f4d0cc]">매수</button>
    <button type="button" className="w-10 border border-[#888888] bg-[#c8dff4]">매도</button>
  </div>
);

const Tool = ({ label, active = false, children }: { label: string; active?: boolean; children: React.ReactNode }) => (
  <button type="button" aria-label={label} className={`flex h-[17px] w-[17px] items-center justify-center text-[#606060] ${active ? 'bg-white' : ''}`}>
    {children}
  </button>
);

const Glyph = ({ d }: { d: string }) => (
  <svg viewBox="0 0 14 14" className="size-3.5" fill="none" stroke="currentColor">
    <path d={d} />
  </svg>
);

const PlayBtn = ({ label, children }: { label: string; children: React.ReactNode }) => (
  <button type="button" aria-label={label} className="flex h-4 w-[17px] items-center justify-center border-r border-b border-[#707070] bg-[#f0f0f0] text-black">
    {children}
  </button>
);

const BottomBar = () => (
  <footer className="mt-px flex h-4 items-center">
    <PlayBtn label="왼쪽으로"><Play size={8} fill="currentColor" className="rotate-180" /></PlayBtn>
    <div className="flex h-4 flex-1 justify-end bg-[#f4f4f4]">
      <div className="h-full w-[32%] border-r border-b-2 border-l border-[#808080] bg-[#f0f0f0]" />
    </div>
    <PlayBtn label="재생"><Play size={8} fill="currentColor" /></PlayBtn>
    <PlayBtn label="뒤로"><ChevronsLeft size={14} strokeWidth={4} /></PlayBtn>
    <PlayBtn label="정지"><Square size={8} fill="currentColor" /></PlayBtn>
    <PlayBtn label="앞으로"><ChevronsRight size={14} strokeWidth={4} /></PlayBtn>
    <div className="mx-1.5 w-[69px]">
      <input
        type="range"
        aria-label="재생 속도"
        defaultValue={33}
        className="block h-2 w-full appearance-none bg-transparent [&::-webkit-slider-runnable-track]:h-0.5 [&::-webkit-slider-runnable-track]:bg-[#808080] [&::-webkit-slider-thumb]:-mt-1 [&::-webkit-slider-thumb]:h-2.5 [&::-webkit-slider-thumb]:w-1 [&::-webkit-slider-thumb]:appearance-none [&::-webkit-slider-thumb]:border [&::-webkit-slider-thumb]:border-[#808080] [&::-webkit-slider-thumb]:bg-[#f0f0f0]"
      />
      <div className="flex justify-between px-0.5 pt-0.5">
        {Array.from({ length: 10 }).map((_, i) => <span key={i} className="h-[3px] w-px bg-black" />)}
      </div>
    </div>
    <Tool label="격자"><Glyph d="M1.500 1.500h9v9h-9zM6.500 6.500h7v7h-7zM10 6.500v7M6.500 10h7" /></Tool>
    <Tool label="겹치기"><Glyph d="M1.500 1.500h8v7h-8zM5.500 5.500h8v7h-8z M5.500 6.500h8" /></Tool>
    <Tool label="전체 보기"><Glyph d="M1 1.500h2M5 1.500h2M9 1.500h2M1 12.500h2M5 12.500h2M9 12.500h2M1 9l3-3 3 2 4-4 2 1" /></Tool>
    <Tool label="십자선" active><Glyph d="M0 3.500h14M3.500 0v14M6 6l6 6M6 11V6h5" /></Tool>
    <Tool label="수평선"><Glyph d="M1 2.500h13M1 11l4-5 3 3 3-6 3 5" /></Tool>
    <Tool label="수직선"><Glyph d="M3.500 0v14M1 10l4-5 3 5 3-5 3 3" /></Tool>
    <Tool label="추세선"><Glyph d="M1 12L11 1M1 9l4 2 3-5 5 5M2 13L12 2" /></Tool>
    <Tool label="지우기"><Eraser size={14} /></Tool>
    <Tool label="차트 겹치기"><Glyph d="M4.500 1.500h9v8h-9zM.5 5.500h9v7h-9zM2 10l2-2 2 2 3-3" /></Tool>
    <Tool label="확대경"><Search size={14} /></Tool>
    <Tool label="축소"><Minus size={13} strokeWidth={4} /></Tool>
    <Tool label="확대"><Plus size={13} strokeWidth={4} /></Tool>
    <Tool label="글꼴"><span className="font-['Liberation_Sans',sans-serif] text-[14px] font-bold">A</span></Tool>
  </footer>
);

export default function App() {
  return (
    <div className={`min-h-screen bg-black pt-px pb-[3px] ${TEXT}`}>
      <TitleBar />
      <main className="mr-[3px] ml-[3px] bg-[#d0d0d0] pt-[5px]">
        <Toolbar />
        <QuoteBar />
        <div className="mt-[3px] bg-[#e8e8e8] pr-[3px] pb-1 pl-0.5">
          <section className="border border-[#909090] bg-white">
            <div className="flex h-[803px]">
              <div className="relative w-[43px] shrink-0 overflow-hidden border-r border-[#909090]">
                <button type="button" aria-label="데이터 표" className="absolute top-[19px] left-[6px] flex size-3.5 items-center justify-center border border-black text-[#707070]">
                  <svg viewBox="0 0 10 10" className="size-2.5" fill="none" stroke="currentColor"><path d="M.5 .5h9v9h-9zM.5 3.500h9M.5 6.500h9M3.500 .5v9M6.500 .5v9" /></svg>
                </button>
                <Axis labels={LEFT_LABELS} origin={TOP} side="left" />
                <div className="absolute top-[362px] left-0.5 flex w-[37px] flex-col items-end border border-black bg-[#ffdc70] py-px whitespace-nowrap text-[#404040]">
                  <span className="pr-0.5">5,723</span>
                  <span className="text-[#ff0000]">+0,93%</span>
                </div>
                <span className="absolute top-[765px] right-1 bg-[#1060c8] px-px text-white">5,510</span>
                <span className="absolute top-[778px] right-2 text-[#1060c8]">.82%</span>
              </div>
              <div className="relative flex-1 overflow-hidden">
                <PricePane />
                <Note top={8} x={60} className="border border-[#c0c0c0] bg-[#f0f0f0] px-[3px] text-[13px] text-[#404040]">알피바이오 매물대 수(13)</Note>
                <span className="absolute top-[6px] left-[3px] size-1.5 border border-[#808080] bg-[#c0c0c0]" />
                <Note top={48} x={1228} className="text-[#ff0000]">최고 5,910 (-6,77%, 13:31)</Note>
                <Note top={765} x={1695} className="text-[#0000ff]">최저 5,510 (0,00%, 15:30)</Note>
                <Note top={45} x={1681} className="text-[#ff6600]">(고가+저가+종가)/3 가중</Note>
                <Note top={45} x={1752} className="text-black">저가 지수 24</Note>
                <Note top={45} className="text-[#ff6600]">28: 5,642</Note>
                <Note top={57} className="text-[#c0c0c0]">120: 5,630</Note>
                <Note top={57} className="text-[#00ccff]">10: 5,564</Note>
                <Note top={69} className="text-black">1000: 5,708</Note>
                <Note top={69} className="text-black">480: 5,688</Note>
                <Note top={81} className="text-[#ffcc00]">150: 5,620</Note>
                <Note top={81} className="text-[#ff0000]">5: 5,552</Note>
                <Note top={94} className="text-[#0000ff]">10: 5,564</Note>
                <Note top={413} className="text-[#00ff00]">당일시가 5,710 (0,71%)</Note>
                <Note top={482} className="text-[#993300]">전일종가 5,670 (0,00%)</Note>
              </div>
              <div className="relative w-[47px] shrink-0 overflow-hidden border-l border-[#909090]">
                <Ticks from={33} to={783} step={18.66} major={5} />
                <Axis labels={RIGHT_LABELS} origin={TOP} side="right" />
                <p className="pt-px whitespace-nowrap text-[#e81a0c]">LC:0,00</p>
                <p className="whitespace-nowrap text-[#1060c8]">HC:-6,77</p>
                <div className="absolute top-[362px] left-[3px] flex w-[42px] flex-col items-center border border-black bg-[#ffdc70] py-px whitespace-nowrap text-[#404040]">
                  <span>5,723</span>
                  <span className="text-[#ff0000]">+0,93%</span>
                </div>
                <span className="absolute top-[765px] left-1 w-10 bg-[#1060c8] pl-1 text-white">5,510</span>
                <span className="absolute top-[778px] left-2 text-[#1060c8]">-2,82%</span>
              </div>
            </div>

            <div className="flex h-[158px] border-t border-[#909090]">
              <div className="relative w-[43px] shrink-0 border-r border-[#909090] bg-[#f8f8f8]">
                <Axis labels={[[903, '30,000'], [938, '40,000'], [974, '50,000'], [1009, '60,000']]} origin={SUB} side="left" />
              </div>
              <div className="relative flex-1 overflow-hidden">
                <VolumePane />
                <Note top={46} className="text-[#339999]">거래량: 6,867</Note>
                <Note top={58} className="text-[#ffff00]">단순 3: 2,625</Note>
                <Note top={70} className="text-black">54: 324</Note>
                <Note top={82} className="text-[#00ff00]">13: 708</Note>
                <Note top={98} className="text-[#993300]">Signal 60: -159,748</Note>
                <Note top={110} className="text-[#ff9900]">Signal 100: -159,230</Note>
                <Note top={122} className="text-[#00ffff]">Signal 150: -158,080</Note>
                <Note top={134} className="text-[#ff9900]">OBV: -159,208</Note>
                <Note top={134} className="text-[#008833]">KVO: -89,208</Note>
                <Note top={146} className="text-[#0000ff]">Signal 24: -161,139</Note>
              </div>
              <div className="relative w-[47px] shrink-0 border-l border-[#909090] bg-[#f8f8f8]">
                <Ticks from={0} to={156} step={5.2} major={5} />
                <Axis labels={[[907, '12,500'], [933, '10,000'], [959, '7,500'], [985, '5,000'], [1010, '2,500']]} origin={SUB} side="right" />
                <button type="button" aria-label="지표 닫기" className="absolute top-[3px] right-0.5 flex size-2 items-center justify-center bg-[#404040] text-white"><X size={7} strokeWidth={4} /></button>
              </div>
            </div>

            <div className="flex h-[18px] border-t border-[#909090] text-[#404040]">
              <div className="w-[43px] shrink-0 border-r border-[#909090]" />
              <div className="relative flex-1">
                <span className="absolute top-px left-0.5 font-bold">03/14</span>
                {TIMES.map(([x, t]) => (
                  <span key={t} className="absolute top-0 h-full border-l border-[#909090] pt-px pl-px" style={{ left: pct(x) }}>
                    {t}
                  </span>
                ))}
                <span className="absolute top-0 flex h-[17px] w-[136px] items-center justify-center border border-black bg-[#ffdc70] whitespace-nowrap" style={{ left: pct(1644) }}>
                  2025/03/17(월) 14:45:30
                </span>
              </div>
              <div className="w-[47px] shrink-0 overflow-hidden border-l border-[#909090] pt-px pl-2 whitespace-nowrap">15:30:2</div>
            </div>
          </section>
          <BottomBar />
        </div>
      </main>
    </div>
  );
}
